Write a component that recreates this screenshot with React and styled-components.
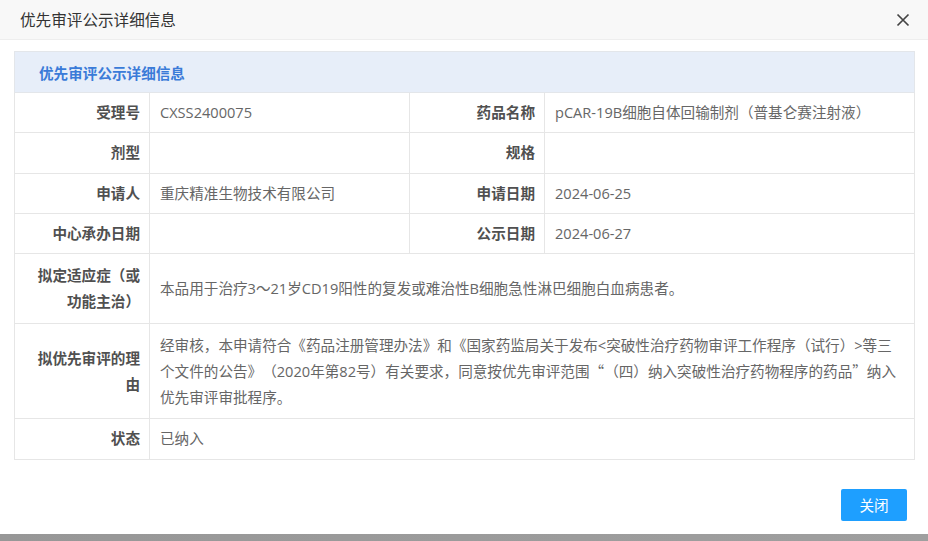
import React from "react";
import styled, { createGlobalStyle } from "styled-components";

const Global = createGlobalStyle`
  html, body { margin: 0; padding: 0; background: #fff; }
  body {
    font-family: "Open Sans", "Noto Sans CJK SC", sans-serif;
    font-size: 14.6px;
    color: #666;
    text-spacing-trim: space-all;
  }
`;

const Dialog = styled.div`
  width: 928px;
  height: 541px;
  display: flex;
  flex-direction: column;
  background: #fff;
  overflow: hidden;
`;

const Header = styled.div`
  height: 39px;
  flex: none;
  display: flex;
  align-items: center;
  justify-content: space-between;
  padding: 0 16px 0 20px;
  background: #f8f8f8;
  border-bottom: 1px solid #eee;
  color: #333;
  font-size: 15.6px;
`;

const CloseBtn = styled.button`
  width: 18px;
  height: 18px;
  padding: 0;
  border: 0;
  background: transparent;
  display: flex;
  align-items: center;
  justify-content: center;
  cursor: pointer;
`;

const Body = styled.div`
  padding: 11px 14px 0 14px;
  flex: none;
`;

const Table = styled.table`
  width: 900px;
  border-collapse: collapse;
  table-layout: fixed;
`;

const TitleCell = styled.td`
  height: 40px;
  padding: 0 24px;
  background: #e7eef9;
  border: 1px solid #e3e6ea;
  color: #3a7bd8;
  font-weight: bold;
  font-size: 14.6px;
`;

const Cell = styled.td`
  border: 1px solid #e6e6e6;
  padding: 8px 10px 8px 10px;
  line-height: ${(p) => (p.$multi ? "26.3px" : "23.25px")};
  vertical-align: middle;
  word-break: break-all;
  text-spacing-trim: space-all;
`;

const LabelCell = styled(Cell)`
  text-align: right;
  font-weight: bold;
  color: #505050;
  padding-right: 9px;
`;

const ValueCell = styled(Cell)`
  color: #666;
`;

const Punct = styled.span`
  font-family: "Noto Sans CJK SC", sans-serif;
`;

const Footer = styled.div`
  flex: 1;
  display: flex;
  justify-content: flex-end;
  align-items: flex-start;
  padding: 29px 21px 0 0;
`;

const Button = styled.button`
  width: 66px;
  height: 32px;
  border: 0;
  border-radius: 2px;
  background: #1e9fff;
  color: #fff;
  font-family: "Noto Sans CJK SC", sans-serif;
  font-size: 14.6px;
  cursor: pointer;
`;

const Shade = styled.div`
  height: 7px;
  flex: none;
  background: linear-gradient(90deg, #979797, #9f9f9f);
`;

const rows = [
  [["受理号", "CXSS2400075"], ["药品名称", "pCAR-19B细胞自体回输制剂（普基仑赛注射液）"]],
  [["剂型", ""], ["规格", ""]],
  [["申请人", "重庆精准生物技术有限公司"], ["申请日期", "2024-06-25"]],
  [["中心承办日期", ""], ["公示日期", "2024-06-27"]],
];

export default function App() {
  return (
    <>
      <Global />
      <Dialog>
        <Header>
          <span>优先审评公示详细信息</span>
          <CloseBtn aria-label="关闭">
            <svg width="14" height="14" viewBox="0 0 14 14">
              <path d="M1.5 1.5 L12.5 12.5 M12.5 1.5 L1.5 12.5" stroke="#444" strokeWidth="1.7" fill="none" />
            </svg>
          </CloseBtn>
        </Header>
        <Body>
          <Table>
            <colgroup>
              <col style={{ width: 135 }} />
              <col style={{ width: 260 }} />
              <col style={{ width: 135 }} />
              <col style={{ width: 370 }} />
            </colgroup>
            <tbody>
              <tr>
                <TitleCell colSpan={4}>优先审评公示详细信息</TitleCell>
              </tr>
              {rows.map((r, i) => (
                <tr key={i}>
                  <LabelCell>{r[0][0]}</LabelCell>
                  <ValueCell>{r[0][1]}</ValueCell>
                  <LabelCell>{r[1][0]}</LabelCell>
                  <ValueCell>{r[1][1]}</ValueCell>
                </tr>
              ))}
              <tr>
                <LabelCell $multi>拟定适应症（或功能主治）</LabelCell>
                <ValueCell $multi colSpan={3}>
                  本品用于治疗3～21岁CD19阳性的复发或难治性B细胞急性淋巴细胞白血病患者。
                </ValueCell>
              </tr>
              <tr>
                <LabelCell $multi>拟优先审评的理由</LabelCell>
                <ValueCell $multi colSpan={3}>
                  经审核，本申请符合《药品注册管理办法》和《国家药监局关于发布&lt;突破性治疗药物审评工作程序（试行）&gt;等三个文件的公告》（2020年第82号）有关要求，同意按优先审评范围<Punct>“</Punct>（四）纳入突破性治疗药物程序的药品<Punct>”</Punct>纳入优先审评审批程序。
                </ValueCell>
              </tr>
              <tr>
                <LabelCell>状态</LabelCell>
                <ValueCell colSpan={3}>已纳入</ValueCell>
              </tr>
            </tbody>
          </Table>
        </Body>
        <Footer>
          <Button>关闭</Button>
        </Footer>
        <Shade />
      </Dialog>
    </>
  );
}
